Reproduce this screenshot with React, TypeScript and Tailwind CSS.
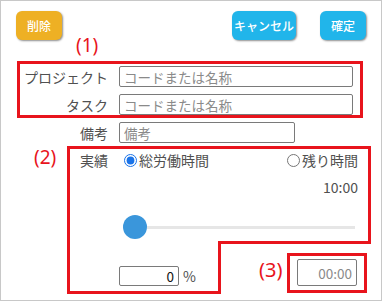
import React from 'react';

const jp = "font-['Noto_Sans_CJK_JP','Noto_Sans',sans-serif]";

function Field({ label, placeholder, width }: { label: string; placeholder: string; width: string }) {
    return (
        <div className="flex items-center h-[21px]">
            <span className="w-[92px] text-right text-[14px] leading-[20px] text-[#505050]">{label}</span>
            <input
                readOnly
                placeholder={placeholder}
                className={`ml-[11px] h-[21px] ${width} border border-[#7a7a7a] rounded-[2px] px-[4px] text-[13.5px] leading-[19px] placeholder:text-[#8a8a8a] outline-none`}
            />
        </div>
    );
}

export default function App() {
    return (
        <div className={`relative w-[383px] h-[302px] bg-white ${jp}`}>
            <div className="w-[382px] h-[301px] border border-[#c8c8c8] flex flex-col">
                {/* action buttons */}
                <div className="flex items-center pt-[10px] pl-[15px] pr-[15px]">
                    <button className="w-[46px] h-[29px] rounded-[6px] bg-[#eeb024] text-white text-[12px] font-medium shadow-[1px_1px_2px_rgba(0,0,0,0.45)]">
                        削除
                    </button>
                    <div className="flex-1" />
                    <button className="w-[64px] h-[29px] rounded-[6px] bg-[#21b5ea] text-white text-[12px] font-medium shadow-[1px_1px_2px_rgba(0,0,0,0.45)]">
                        キャンセル
                    </button>
                    <button className="ml-[24px] w-[46px] h-[29px] rounded-[6px] bg-[#21b5ea] text-white text-[12px] font-medium shadow-[1px_1px_2px_rgba(0,0,0,0.45)]">
                        確定
                    </button>
                </div>

                <div className="mt-[26px] pl-[15px] flex flex-col gap-[7px]">
                    <Field label="プロジェクト" placeholder="コードまたは名称" width="w-[234px]" />
                    <Field label="タスク" placeholder="コードまたは名称" width="w-[234px]" />
                    <Field label="備考" placeholder="備考" width="w-[176px]" />
                </div>

                {/* actual time */}
                <div className="mt-[7px] pl-[15px] flex">
                    <span className="w-[92px] h-[20px] text-right text-[14px] leading-[20px] text-[#505050]">実績</span>
                    <div className="ml-[11px] w-[239px] flex flex-col">
                        <div className="flex items-center justify-between h-[20px] text-[14px] leading-[20px] text-[#505050]">
                            <label className="flex items-center">
                                <input type="radio" name="mode" defaultChecked className="ml-[5px] mr-[2px] w-[13px] h-[13px] accent-[#1a73e8]" />
                                総労働時間
                            </label>
                            <label className="flex items-center">
                                <input type="radio" name="mode" className="mr-[2px] w-[13px] h-[13px]" />
                                残り時間
                            </label>
                        </div>
                        <div className="mt-[7px] h-[20px] text-right text-[14px] leading-[20px] text-[#505050]">10:00</div>
                        <div className="mt-[18px] flex items-center h-[24px] pl-[4px] pr-[3px]">
                            <div className="w-[24px] h-[24px] rounded-full bg-[#3a96db]" />
                            <div className="flex-1 h-[3px] bg-[#e6e6e6]" />
                        </div>
                        <div className="mt-[20px] flex items-end justify-between">
                            <div className="flex items-center">
                                <input
                                    readOnly
                                    value="0"
                                    className="w-[60px] h-[20px] border border-[#7a7a7a] rounded-[2px] px-[4px] text-right text-[13.5px] leading-[18px] text-[#111] outline-none"
                                />
                                <span className="ml-[4px] text-[14px] leading-[20px] text-[#505050]">%</span>
                            </div>
                            <input
                                readOnly
                                value="00:00"
                                className="mr-[1px] w-[60px] h-[27px] border border-[#7a7a7a] rounded-[2px] px-[4px] text-right text-[13.5px] text-[#8a8a8a] outline-none"
                            />
                        </div>
                    </div>
                </div>
            </div>

            {/* annotations */}
            <svg className="absolute left-0 top-0 pointer-events-none" width="383" height="302" viewBox="0 0 383 302">
                <rect x="18.5" y="62.5" width="343" height="54" fill="none" stroke="#e8141c" strokeWidth="3" />
                <path d="M68.5 147.5 H369.5 V242.5 H219.5 V292.5 H68.5 Z" fill="none" stroke="#e8141c" strokeWidth="3" />
                <rect x="288.5" y="254.5" width="77" height="37" fill="none" stroke="#e8141c" strokeWidth="3" />
            </svg>
            <span className="absolute left-[76px] top-[33px] text-[19px] leading-[24px] text-[#e8141c] font-['Noto_Sans',sans-serif]">(1)</span>
            <span className="absolute left-[34px] top-[145px] text-[19px] leading-[24px] text-[#e8141c] font-['Noto_Sans',sans-serif]">(2)</span>
            <span className="absolute left-[259px] top-[257px] text-[20px] leading-[26px] text-[#e8141c] font-['Noto_Sans',sans-serif]">(3)</span>
        </div>
    );
}
